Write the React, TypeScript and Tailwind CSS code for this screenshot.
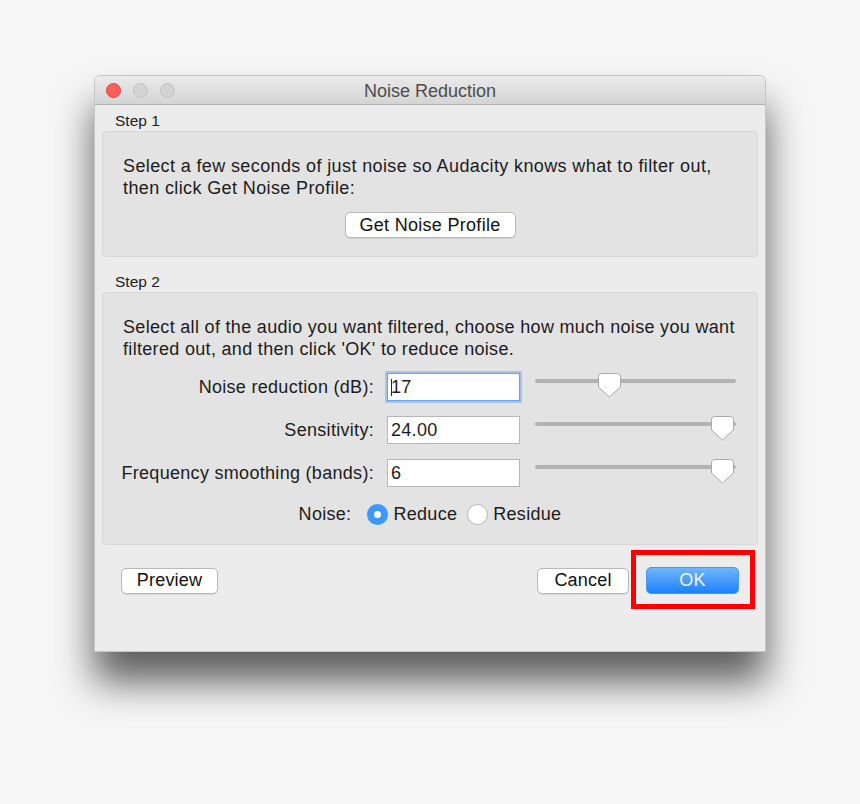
import React from "react";

interface sliderRowProps {
  label: string;
  value: string;
  thumbLeft: string;
  focused?: boolean;
}

function Thumb() {
  return (
    <svg width="23" height="25" viewBox="0 0 23 25">
      <path
        d="M3.5 0.5 H19.5 Q22.5 0.5 22.5 3.5 V14 L11.5 24 L0.5 14 V3.5 Q0.5 0.5 3.5 0.5 Z"
        fill="#ffffff"
        stroke="#a9a9a9"
        strokeWidth="1"
      />
    </svg>
  );
}

function SliderRow({ label, value, thumbLeft, focused }: sliderRowProps) {
  return (
    <div className="flex items-center h-[28px]">
      <div className="w-[251px] shrink-0 flex justify-end whitespace-nowrap">
        <span>{label}</span>
      </div>
      <div
        className={
          focused
            ? "ml-[13px] shrink-0 w-[133px] h-[28px] bg-white border border-[#6ea2e3] shadow-[0_0_0_2px_rgba(120,170,235,0.55)] flex items-center pl-[3px] relative"
            : "ml-[13px] shrink-0 w-[133px] h-[28px] bg-white border border-[#b7b7b7] flex items-center pl-[3px]"
        }
      >
        {focused && <span className="absolute left-[3px] top-[5px] w-[1px] h-[17px] bg-[#222]" />}
        <span>{value}</span>
      </div>
      <div className="ml-[15px] shrink-0 w-[201px] h-[28px] relative">
        <div className="mt-[6px] w-full h-[4px] rounded-full bg-[#b3b3b3]" />
        <div className={"absolute top-0 " + thumbLeft}>
          <Thumb />
        </div>
      </div>
    </div>
  );
}

function Btn({ children, w }: { children: React.ReactNode; w: string }) {
  return (
    <div
      className={
        "h-[26px] bg-white border border-[#b8b8b8] rounded-[5px] shadow-[0_1px_0_rgba(0,0,0,0.08)] flex items-center justify-center text-[#111] " +
        w
      }
    >
      {children}
    </div>
  );
}

export default function App() {
  return (
    <div
      className="min-h-[804px] w-full bg-[#f6f6f6] flex justify-center pt-[75px] text-[18px] text-[#1c1c1c]"
      style={{ fontFamily: '"Liberation Sans", Arial, sans-serif' }}
    >
      <div className="w-[672px] h-[577px] flex flex-col bg-[#ececec] rounded-t-[6px] border border-[#c6c6c6] shadow-[0_30px_38px_rgba(0,0,0,0.62)] overflow-hidden">
        {/* title bar */}
        <div className="h-[29px] shrink-0 relative flex items-center justify-center bg-gradient-to-b from-[#ebebeb] to-[#d4d4d4] border-b border-[#b1b1b1]">
          <div className="absolute left-[11px] top-[7px] flex gap-[12px]">
            <span className="w-[15px] h-[15px] rounded-full bg-[#fc5f57] border border-[#e0443e]" />
            <span className="w-[15px] h-[15px] rounded-full bg-[#d3d3d3] border border-[#c2c2c2]" />
            <span className="w-[15px] h-[15px] rounded-full bg-[#d3d3d3] border border-[#c2c2c2]" />
          </div>
          <span className="text-[#4d4d4d] leading-none mt-[1px]">Noise Reduction</span>
        </div>

        <div className="flex flex-col px-[7px] pt-[6px] tracking-[0.3px]">
          <div className="h-[20px] leading-[20px] text-[15.5px] pl-[13px] text-[#222] tracking-normal">Step 1</div>
          <div className="h-[126px] bg-[#e3e3e3] border border-[#d8d8d8] rounded-[4px] flex flex-col pt-[23px] px-[20px]">
            <div className="leading-[22px] whitespace-nowrap tracking-[0.38px]">
              Select a few seconds of just noise so Audacity knows what to filter out,
              <br />
              then click Get Noise Profile:
            </div>
            <div className="flex justify-center mt-[13px]">
              <Btn w="w-[171px]">Get Noise Profile</Btn>
            </div>
          </div>

          <div className="h-[20px] leading-[20px] text-[15.5px] pl-[13px] mt-[15px] text-[#222] tracking-normal">Step 2</div>
          <div className="h-[253px] bg-[#e3e3e3] border border-[#d8d8d8] rounded-[4px] flex flex-col pt-[23px] px-[20px]">
            <div className="leading-[22px] whitespace-nowrap tracking-[0.32px]">
              Select all of the audio you want filtered, choose how much noise you want
              <br />
              filtered out, and then click 'OK' to reduce noise.
            </div>
            <div className="flex flex-col gap-[15px] mt-[13px]">
              <SliderRow label="Noise reduction (dB):" value="17" thumbLeft="left-[63px]" focused />
              <SliderRow label="Sensitivity:" value="24.00" thumbLeft="left-[176px]" />
              <SliderRow label="Frequency smoothing (bands):" value="6" thumbLeft="left-[176px]" />
            </div>
            <div className="flex items-center justify-center h-[22px] mt-[16px]">
              <span>Noise:</span>
              <span className="ml-[16px] w-[21px] h-[21px] rounded-full bg-[#3d98fb] flex items-center justify-center">
                <span className="w-[7px] h-[7px] rounded-full bg-white" />
              </span>
              <span className="ml-[5px]">Reduce</span>
              <span className="ml-[10px] w-[21px] h-[21px] rounded-full bg-white border border-[#b5b5b5]" />
              <span className="ml-[5px]">Residue</span>
            </div>
          </div>
        </div>

        <div className="flex items-center justify-between px-[26px] mt-[22px] tracking-[0.2px]">
          <Btn w="w-[97px]">Preview</Btn>
          <div className="flex items-center gap-[17px]">
            <Btn w="w-[92px]">Cancel</Btn>
            <div className="relative">
              <div className="w-[93px] h-[27px] rounded-[5px] bg-gradient-to-b from-[#6fb5fb] to-[#1681fb] border border-[#4b95ee] flex items-center justify-center text-[#eef5ff]">
                OK
              </div>
              <div className="absolute -left-[15px] -right-[16px] -top-[17px] -bottom-[15px] border-[5px] border-[#ff0000]" />
            </div>
          </div>
        </div>
      </div>
    </div>
  );
}
